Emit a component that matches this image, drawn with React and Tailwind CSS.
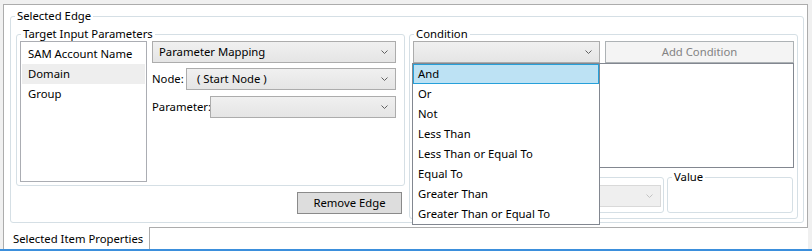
import React from 'react';

const conditionOps = [
  'And',
  'Or',
  'Not',
  'Less Than',
  'Less Than or Equal To',
  'Equal To',
  'Greater Than',
  'Greater Than or Equal To',
];

const Chevron = ({ color = '#606060' }) => (
  <svg width="7" height="4" viewBox="0 0 7 4" className="shrink-0">
    <path d="M0.5 0.5L3.5 3.5L6.5 0.5" fill="none" stroke={color} strokeWidth="1" />
  </svg>
);

// WPF style group box: bordered frame with the caption sitting on the top line
const GroupBox = ({ label, className = '', children }) => (
  <div className={`border border-[#d5dfe5] rounded-[3px] ${className}`}>
    <div
      className={`-mt-[9px] ml-[4px] bg-white w-fit h-[15px] leading-[15px] whitespace-nowrap ${
        label ? 'px-[2px]' : ''
      }`}
    >
      {label}
    </div>
    {children}
  </div>
);

const Combo = ({ text, className = '', disabled = false, textClass = 'pl-[6px]' }) => (
  <div
    className={`h-[22px] flex items-center justify-between pr-[7px] border ${
      disabled
        ? 'border-[#d9d9d9] bg-[#efefef]'
        : 'border-[#acacac] bg-linear-to-b from-[#f0f0f0] to-[#e5e5e5]'
    } ${className}`}
  >
    <span className={`${textClass} leading-[20px] whitespace-nowrap`}>{text}</span>
    <Chevron color={disabled ? '#c2c2c2' : '#606060'} />
  </div>
);

const App = () => {
  return (
    <div className="w-[812px] h-[251px] bg-[#f0f0f0] flex flex-col font-['Noto_Sans',sans-serif] text-[11.3px] text-black overflow-hidden">
      <div className="pt-[4px] pl-[3px] pr-[4px] flex flex-col">
        {/* tab content panel */}
        <div className="h-[223px] bg-white border-l border-t border-r border-[#acacac] pt-[11px] pl-[6px]">
          <GroupBox label="Selected Edge" className="w-[794px] h-[207px]">
            <div className="flex gap-[4px] px-[5px] mt-[11px]">
              {/* left column */}
              <div className="w-[389px] flex flex-col">
                <GroupBox label="Target Input Parameters" className="h-[152px]">
                  <div className="flex pl-[3px]">
                    <div className="w-[127px] h-[141px] border border-[#abadb3] px-[1px] pt-[2px]">
                      <div className="h-[20px] leading-[20px] pl-[6px]">SAM Account Name</div>
                      <div className="h-[20px] leading-[20px] pl-[6px] bg-[#eeeeee]">Domain</div>
                      <div className="h-[20px] leading-[20px] pl-[6px]">Group</div>
                    </div>
                    <div className="ml-[5px] w-[244px] flex flex-col">
                      <Combo text="Parameter Mapping" />
                      <div className="flex mt-[5px]">
                        <span className="w-[34px] leading-[20px] pt-[1px]">Node:</span>
                        <Combo text="( Start Node )" className="w-[210px]" textClass="pl-[10px]" />
                      </div>
                      <div className="flex mt-[6px]">
                        <span className="w-[58px] leading-[20px] pt-[1px]">Parameter:</span>
                        <Combo text="" className="w-[186px]" />
                      </div>
                    </div>
                  </div>
                </GroupBox>
                <button className="self-end mr-[3px] mt-[6px] w-[105px] h-[22px] bg-[#dddddd] border border-[#8a8a8a] leading-[20px] text-center">
                  Remove Edge
                </button>
              </div>

              {/* right column */}
              <GroupBox label="Condition" className="w-[389px] h-[185px]">
                <div className="px-[3px] flex flex-col">
                  <div className="flex gap-[5px]">
                    <div className="relative w-[187px]">
                      <Combo text="" />
                      <div className="absolute top-full -left-[1px] w-[188px] h-[162px] bg-white border border-[#828790] z-10">
                        {conditionOps.map((op, i) => (
                          <div
                            key={op}
                            className={`h-[20px] leading-[18px] pl-[4px] border whitespace-nowrap ${
                              i === 0 ? 'bg-[#bde2f4] border-[#26a0da]' : 'border-transparent'
                            }`}
                          >
                            {op}
                          </div>
                        ))}
                      </div>
                    </div>
                    <div className="flex-1 h-[22px] bg-[#f4f4f4] border border-[#adb2b5] text-[#838383] leading-[20px] text-center">
                      Add Condition
                    </div>
                  </div>
                  <div className="h-[105px] border border-[#828790]" />
                  <div className="flex gap-[3px] mt-[9px]">
                    <GroupBox label="" className="w-[251px] h-[36px]">
                      <div className="px-[2px] mt-[1px]">
                        <Combo text="" disabled />
                      </div>
                    </GroupBox>
                    <GroupBox label="Value" className="w-[126px] h-[36px]" />
                  </div>
                </div>
              </GroupBox>
            </div>
          </GroupBox>
        </div>

        {/* tab strip */}
        <div className="h-[22px] flex">
          <div className="w-[147px] bg-white border-l border-r border-[#acacac] pl-[9px] leading-[23px] whitespace-nowrap">
            Selected Item Properties
          </div>
          <div className="flex-1 bg-white border-t border-[#acacac]" />
        </div>
      </div>
      <div className="h-[2px] bg-[#3b8fdc]" />
    </div>
  );
};

export default App;
